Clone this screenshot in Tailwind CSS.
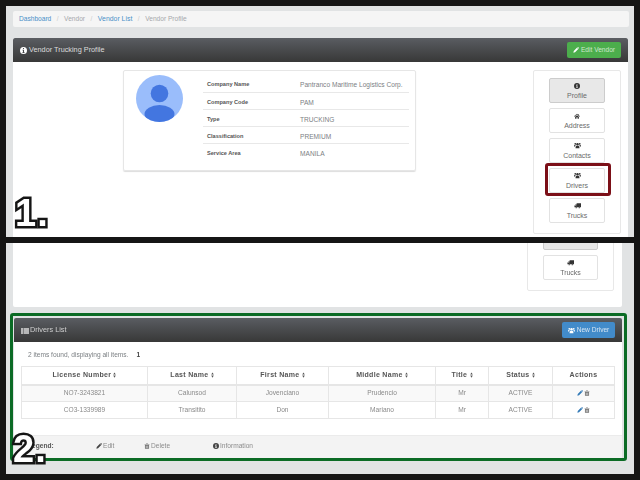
<!DOCTYPE html>
<html>
<head>
<meta charset="utf-8">
<script src="https://cdn.jsdelivr.net/npm/@tailwindcss/browser@4"></script>
</head>
<body class="m-0">
<svg class="hidden" width="0" height="0">
  <symbol id="info" viewBox="0 0 16 16"><path fill-rule="evenodd" d="M8 0a8 8 0 1 0 0 16A8 8 0 0 0 8 0zM6.800 2.500h2.400v2.300H6.800zM5.800 6.300h3.400v5.400h1v1.800H5.800v-1.800h1V8.100h-1z" fill="currentColor"/></symbol>
  <symbol id="pencil" viewBox="0 0 16 16"><path d="M1 15l1-4.500L10.500 2 14 5.500 5.500 14zM11.500 1l.8-.6c.6-.5 1.200-.5 1.700 0l1.600 1.600c.5.500.5 1.100 0 1.700l-.6.800z" fill="currentColor"/></symbol>
  <symbol id="users" viewBox="0 0 16 16"><g fill="currentColor"><circle cx="8" cy="5" r="2.800"/><path d="M3.500 14c0-3.500 1-5.500 2.500-5.500h4c1.500 0 2.500 2 2.500 5.500z"/><circle cx="2.900" cy="4.200" r="2"/><circle cx="13.100" cy="4.200" r="2"/><path d="M0 10c0-2 .5-3 1.500-3h2.300C3 8 2.800 9 2.700 10zM16 10c0-2-.5-3-1.500-3h-2.300c.8 1 1 2 1.100 3z"/></g></symbol>
  <symbol id="home" viewBox="0 0 16 16"><path d="M8 2l8 6.500-1 1.200L8 4 1 9.700 0 8.500zM3 10l5-4 5 4v5H9.500v-3.500h-3V15H3zM11 3h2v3l-2-1.600z" fill="currentColor"/></symbol>
  <symbol id="truck" viewBox="0 0 16 16"><path d="M6 3h10v9h-2.200a2 2 0 0 0-3.600 0H6.800A2 2 0 0 0 5 11a2 2 0 0 0-1.800 1H1V8.500L3.500 5.500H6zM4 6.800L2.500 8.500H5V6.800z" fill="currentColor"/><circle cx="5" cy="13" r="1.500" fill="currentColor"/><circle cx="12" cy="13" r="1.500" fill="currentColor"/></symbol>
  <symbol id="list" viewBox="0 0 16 16"><path d="M0 2.500h4v3H0zM5 2.500h11v3H5zM0 6.500h4v3H0zM5 6.500h11v3H5zM0 10.500h4v3H0zM5 10.500h11v3H5z" fill="currentColor"/></symbol>
  <symbol id="trash" viewBox="0 0 16 16"><path fill-rule="evenodd" d="M6 1h4l1 1.500h3.500V4h-13V2.500H5zM2.500 5h11v9.500c0 .5-.5 1-1 1h-9c-.5 0-1-.5-1-1zM5 7v6.500h1V7zM7.500 7v6.500h1V7zM10 7v6.500h1V7z" fill="currentColor"/></symbol>
  <symbol id="sort" viewBox="0 0 8 16"><path d="M4 1L7.500 6.500H.5zM4 15L.5 9.500h7z" fill="currentColor"/></symbol>
</svg>

<div class="relative w-[640px] h-[480px] overflow-hidden bg-[#151515] font-['Liberation_Sans',Arial,sans-serif]">
 <div class="w-[640px] h-[480px] pt-[6px] pl-[6px] text-[6.600px] text-[#7c8084] blur-[0.3px]">

  <!-- Top screenshot -->
  <section class="relative w-[628px] h-[231px] bg-[#e1e3e4] pl-[7px] pr-[5px] pt-[5px] overflow-hidden">
    <nav class="w-[616px] h-[16px] bg-[#f5f5f5] rounded-[2px] flex items-center pl-[6px] gap-[5.500px] text-[#a5a8ab]">
      <span class="text-[#4a90c8]">Dashboard</span><span class="text-[#ccc]">/</span>
      <span>Vendor</span><span class="text-[#ccc]">/</span>
      <span class="text-[#4a90c8] text-[6.900px]">Vendor List</span><span class="text-[#ccc]">/</span>
      <span>Vendor Profile</span>
    </nav>
    <div class="w-[615px] mt-[11px] bg-white h-[200px]">
      <header class="h-[24px] rounded-t-[2px] bg-gradient-to-b from-[#5a5d62] to-[#383838] flex items-center justify-between pl-[7px] pr-[7px] text-[#dcdcdc] text-[7.300px]">
        <div class="flex items-center gap-[2px] pt-[1px]"><svg class="w-[7px] h-[7px] text-white"><use href="#info"/></svg><span>Vendor Trucking Profile</span></div>
        <div class="h-[16px] w-[54px] rounded-[2px] bg-[#4cae4c] flex items-center justify-center gap-[2px] text-[#cfe8cf] text-[6.600px]"><svg class="w-[6px] h-[6px] text-white"><use href="#pencil"/></svg><span>Edit Vendor</span></div>
      </header>
      <div class="flex pt-[8px] pl-[110px]">
        <div class="w-[293px] h-[101px] rounded-[2px] border border-[#e6e6e6] shadow-[0_1px_1px_#ddd] flex pl-[12px] pt-[4px]">
          <svg class="w-[47px] h-[47px] shrink-0" viewBox="0 0 47 47">
            <defs><clipPath id="a"><circle cx="23.500" cy="23.500" r="23.500"/></clipPath></defs>
            <circle cx="23.500" cy="23.500" r="23.500" fill="#9abdfb"/>
            <g clip-path="url(#a)" fill="#4376e0"><circle cx="23.500" cy="18.500" r="8.800"/><ellipse cx="23.500" cy="39" rx="15" ry="9"/></g>
          </svg>
          <div class="ml-[20px] w-[206px]">
            <div class="h-[17.500px] border-b border-[#e8e8e8] flex pl-[4px] pt-[4px] items-start"><b class="w-[93px] text-[#555] text-[5.600px] leading-[10px]">Company Name</b><span class="leading-[12px] whitespace-nowrap">Pantranco Maritime Logistics Corp.</span></div>
            <div class="h-[17px] border-b border-[#e8e8e8] flex pl-[4px] pt-[4px] items-start"><b class="w-[93px] text-[#555] text-[5.600px] leading-[10px]">Company Code</b><span class="leading-[12px]">PAM</span></div>
            <div class="h-[17px] border-b border-[#e8e8e8] flex pl-[4px] pt-[4px] items-start"><b class="w-[93px] text-[#555] text-[5.600px] leading-[10px]">Type</b><span class="leading-[12px]">TRUCKING</span></div>
            <div class="h-[17px] border-b border-[#e8e8e8] flex pl-[4px] pt-[4px] items-start"><b class="w-[93px] text-[#555] text-[5.600px] leading-[10px]">Classification</b><span class="leading-[12px]">PREMIUM</span></div>
            <div class="h-[17px] flex pl-[4px] pt-[4px] items-start"><b class="w-[93px] text-[#555] text-[5.600px] leading-[10px]">Service Area</b><span class="leading-[12px]">MANILA</span></div>
          </div>
        </div>
        <div class="ml-[117px] w-[88px] h-[164px] rounded-[2px] border border-[#e8e8e8] flex flex-col items-center pt-[7px] gap-[5px] text-[#6a6a6a] text-[7px]">
          <div class="w-[56px] h-[25px] rounded-[2px] bg-[#e8e8e8] border border-[#ccc] flex flex-col items-center pt-[4px] gap-[2px] leading-[9px]"><svg class="w-[6px] h-[6px] text-[#333]"><use href="#info"/></svg><span>Profile</span></div>
          <div class="w-[56px] h-[25px] rounded-[2px] border border-[#e2e2e2] flex flex-col items-center pt-[4px] gap-[2px] leading-[9px]"><svg class="w-[6px] h-[6px] text-[#333]"><use href="#home"/></svg><span>Address</span></div>
          <div class="w-[56px] h-[25px] rounded-[2px] border border-[#e2e2e2] flex flex-col items-center pt-[3px] gap-[2px] leading-[9px]"><svg class="w-[7px] h-[7px] text-[#333]"><use href="#users"/></svg><span>Contacts</span></div>
          <div class="w-[56px] h-[25px] rounded-[2px] border border-[#e2e2e2] flex flex-col items-center pt-[3px] gap-[2px] leading-[9px]"><svg class="w-[7px] h-[7px] text-[#333]"><use href="#users"/></svg><span>Drivers</span></div>
          <div class="w-[56px] h-[25px] rounded-[2px] border border-[#e2e2e2] flex flex-col items-center pt-[3px] gap-[2px] leading-[9px]"><svg class="w-[7px] h-[7px] text-[#333]"><use href="#truck"/></svg><span>Trucks</span></div>
        </div>
      </div>
    </div>
  </section>

  <!-- Bottom screenshot -->
  <section class="relative w-[628px] h-[231px] mt-[6px] bg-[#e1e3e4] pl-[7px] overflow-hidden">
    <div class="w-[609px] h-[64px] bg-white rounded-b-[2px] relative overflow-hidden">
      <div class="absolute left-[514px] top-[-30px] w-[87px] h-[78px] rounded-[2px] border border-[#e8e8e8] flex flex-col items-center pt-[11px] gap-[5px] text-[#6a6a6a] text-[7px]">
        <div class="w-[55px] h-[25px] rounded-[2px] bg-[#e8e8e8] border border-[#ccc] shrink-0"></div>
        <div class="w-[55px] h-[25px] rounded-[2px] border border-[#e2e2e2] flex flex-col items-center pt-[3px] gap-[2px] leading-[9px] shrink-0"><svg class="w-[7px] h-[7px] text-[#333]"><use href="#truck"/></svg><span>Trucks</span></div>
      </div>
    </div>
    <div class="w-[608px] ml-px mt-[11px]">
      <header class="h-[24px] rounded-t-[2px] bg-gradient-to-b from-[#5a5d62] to-[#383838] flex items-center justify-between pl-[7px] pr-[7px] text-[#d0d0d0] text-[7.300px]">
        <div class="flex items-center gap-[1px] pt-[1px]"><svg class="w-[8px] h-[8px] text-[#ddd]"><use href="#list"/></svg><span>Drivers List</span></div>
        <div class="h-[16px] w-[53px] rounded-[2px] bg-[#428bca] flex items-center justify-center gap-[2px] text-[#d5e5f3] text-[6.600px]"><svg class="w-[7px] h-[7px] text-white"><use href="#users"/></svg><span>New Driver</span></div>
      </header>
      <div class="bg-white h-[93px] pl-[7px]">
        <div class="h-[24px] pl-[7px] pt-[8px] flex gap-[8px]"><span>2 items found, displaying all items.</span><b class="text-[#444]">1</b></div>
        <table class="table-fixed border-collapse w-[593px] text-center text-[#8a8a8a]">
          <colgroup><col class="w-[126px]"><col class="w-[89px]"><col class="w-[92px]"><col class="w-[107px]"><col class="w-[53px]"><col class="w-[64px]"><col class="w-[62px]"></colgroup>
          <thead>
            <tr class="h-[18px] text-[#555] font-bold tracking-[0.3px] text-[7px]">
              <th class="border border-[#e6e6e6] border-b-2">License Number <svg class="inline w-[3px] h-[6px]"><use href="#sort"/></svg></th>
              <th class="border border-[#e6e6e6] border-b-2">Last Name <svg class="inline w-[3px] h-[6px]"><use href="#sort"/></svg></th>
              <th class="border border-[#e6e6e6] border-b-2">First Name <svg class="inline w-[3px] h-[6px]"><use href="#sort"/></svg></th>
              <th class="border border-[#e6e6e6] border-b-2">Middle Name <svg class="inline w-[3px] h-[6px]"><use href="#sort"/></svg></th>
              <th class="border border-[#e6e6e6] border-b-2">Title <svg class="inline w-[3px] h-[6px]"><use href="#sort"/></svg></th>
              <th class="border border-[#e6e6e6] border-b-2">Status <svg class="inline w-[3px] h-[6px]"><use href="#sort"/></svg></th>
              <th class="border border-[#e6e6e6] border-b-2">Actions</th>
            </tr>
          </thead>
          <tbody>
            <tr class="h-[17px] bg-[#f9f9f9]">
              <td class="border border-[#e6e6e6]">NO7-3243821</td><td class="border border-[#e6e6e6]">Calunsod</td><td class="border border-[#e6e6e6]">Jovenciano</td><td class="border border-[#e6e6e6]">Prudencio</td><td class="border border-[#e6e6e6]">Mr</td><td class="border border-[#e6e6e6]">ACTIVE</td>
              <td class="border border-[#e6e6e6]"><span class="flex justify-center gap-[1px]"><svg class="w-[6px] h-[6px] text-[#337ab7]"><use href="#pencil"/></svg><svg class="w-[6px] h-[6px] text-[#777]"><use href="#trash"/></svg></span></td>
            </tr>
            <tr class="h-[17px]">
              <td class="border border-[#e6e6e6]">CO3-1339989</td><td class="border border-[#e6e6e6]">Transitito</td><td class="border border-[#e6e6e6]">Don</td><td class="border border-[#e6e6e6]">Mariano</td><td class="border border-[#e6e6e6]">Mr</td><td class="border border-[#e6e6e6]">ACTIVE</td>
              <td class="border border-[#e6e6e6]"><span class="flex justify-center gap-[1px]"><svg class="w-[6px] h-[6px] text-[#337ab7]"><use href="#pencil"/></svg><svg class="w-[6px] h-[6px] text-[#777]"><use href="#trash"/></svg></span></td>
            </tr>
          </tbody>
        </table>
      </div>
      <footer class="h-[24px] bg-[#f3f3f3] border-t border-[#ebebeb] flex items-center pl-[14px] pb-[3px] text-[#8c8c8c]">
        <b class="w-[68px] text-[#555]">Legend:</b>
        <span class="w-[48px] flex items-center gap-[1px]"><svg class="w-[6px] h-[6px] text-[#444]"><use href="#pencil"/></svg>Edit</span>
        <span class="w-[69px] flex items-center gap-[1px]"><svg class="w-[6px] h-[6px] text-[#777]"><use href="#trash"/></svg>Delete</span>
        <span class="flex items-center gap-[1px]"><svg class="w-[6px] h-[6px] text-[#444]"><use href="#info"/></svg>Information</span>
      </footer>
    </div>
  </section>
 </div>

  <!-- Annotations -->
  <div class="absolute left-[545px] top-[163px] w-[66px] h-[33px] border-[3px] border-[#7b0f17] rounded-[3px]"></div>
  <div class="absolute left-[10px] top-[313px] w-[617px] h-[148px] border-[3px] border-[#0b6b25] rounded-[3px]"></div>
  <div class="absolute left-[15px] top-[193px] font-['Liberation_Sans',sans-serif] font-bold text-[38px] leading-[40px] text-white [-webkit-text-stroke:5px_#151515] [paint-order:stroke_fill] tracking-[1px]">1.</div>
  <div class="absolute left-[13px] top-[429px] font-['Liberation_Sans',sans-serif] font-bold text-[38px] leading-[40px] text-white [-webkit-text-stroke:5px_#151515] [paint-order:stroke_fill] tracking-[1px]">2.</div>
</div>
</body>
</html>
